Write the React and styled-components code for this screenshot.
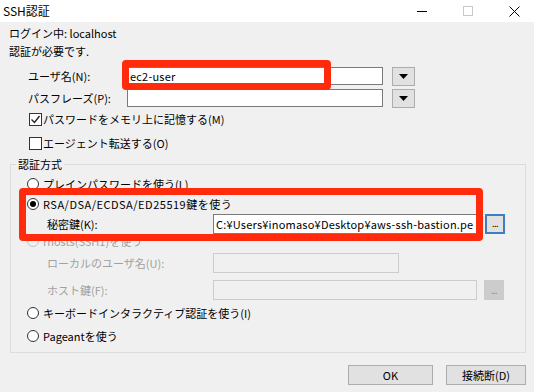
import styled, { createGlobalStyle } from 'styled-components';

const GlobalStyle = createGlobalStyle`
  html, body {
    margin: 0;
    padding: 0;
    background: #f0f0f0;
  }
  body {
    font-family: "Noto Sans CJK JP", "Noto Sans", sans-serif;
    font-size: 11px;
    color: #000;
  }
`;

const Window = styled.div`
  width: 534px;
  height: 392px;
  display: flex;
  flex-direction: column;
  background: #f0f0f0;
  overflow: hidden;
`;

const TitleBar = styled.div`
  height: 22px;
  flex-shrink: 0;
  display: flex;
  align-items: center;
  background: #fff;
  padding-left: 3px;
`;

const Title = styled.span`
  flex: 1;
  font-size: 12px;
  line-height: 22px;
`;

const TitleControls = styled.div`
  display: flex;
  margin-right: -3px;
`;

const TitleButton = styled.div`
  width: 46px;
  height: 22px;
  display: flex;
  align-items: center;
  justify-content: center;
`;

const Content = styled.div`
  display: flex;
  flex-direction: column;
  padding: 2px 8px 0 9px;
`;

const InfoLine = styled.div`
  height: 18px;
  line-height: 18px;
`;

const FieldRow = styled.div`
  display: flex;
  align-items: center;
  height: 20px;
  margin-top: ${p => p.$top || 0}px;
  padding-left: 19px;
`;

const FieldLabel = styled.span`
  width: ${p => p.$width}px;
  flex-shrink: 0;
  color: ${p => (p.$disabled ? '#a0a0a0' : '#000')};
`;

const InputWrap = styled.div`
  position: relative;
  display: flex;
`;

const TextBox = styled.input`
  box-sizing: border-box;
  width: ${p => p.$width}px;
  height: ${p => p.$height || 20}px;
  margin: 0;
  padding: 0 2px;
  border: 1px solid ${p => (p.disabled ? '#cccccc' : '#7a7a7a')};
  background: ${p => (p.disabled ? '#f0f0f0' : '#fff')};
  font: inherit;
  font-size: 11px;
  letter-spacing: 0.2px;
  color: #000;
  outline: none;
`;

const DropButton = styled.div`
  box-sizing: border-box;
  width: 23px;
  height: 19px;
  margin-left: 9px;
  display: flex;
  align-items: center;
  justify-content: center;
  background: #e1e1e1;
  border: 1px solid #adadad;
`;

const BrowseButton = styled.div`
  box-sizing: border-box;
  width: 20px;
  height: 20px;
  margin-left: ${p => p.$gap || 8}px;
  display: flex;
  align-items: flex-end;
  justify-content: center;
  padding-bottom: 4px;
  font-size: 9px;
  line-height: 9px;
  letter-spacing: -0.5px;
  background: ${p => (p.$disabled ? '#cccccc' : '#e1e1e1')};
  border: ${p => (p.$disabled ? '1px solid #cccccc' : '2px solid #3f7fbf')};
  color: ${p => (p.$disabled ? '#8a8a8a' : '#000')};
`;

const Highlight = styled.div`
  position: absolute;
  left: ${p => p.$left}px;
  top: ${p => p.$top}px;
  width: ${p => p.$width}px;
  height: ${p => p.$height}px;
  box-sizing: border-box;
  border: 7px solid #ff2b0c;
  border-radius: 4px;
  pointer-events: none;
`;

const CheckRow = styled.label`
  display: flex;
  align-items: center;
  height: 20px;
  margin-top: ${p => p.$top || 0}px;
  padding-left: 20px;
`;

const CheckBox = styled.span`
  box-sizing: border-box;
  width: 13px;
  height: 13px;
  margin-right: 1px;
  border: 1px solid #333;
  background: #fff;
  display: flex;
  align-items: center;
  justify-content: center;
`;

const Group = styled.fieldset`
  box-sizing: border-box;
  width: 516px;
  margin: 4px 0 0 1px;
  padding: 0 0 6px 16px;
  border: 1px solid #dcdcdc;
  min-width: 0;
`;

const Legend = styled.legend`
  margin-left: -11px;
  padding: 0 2px;
  line-height: 14px;
`;

const RadioRow = styled.div`
  display: flex;
  align-items: center;
  height: ${p => p.$height || 20}px;
  margin-top: ${p => p.$top || 0}px;
  color: ${p => (p.$disabled ? '#a0a0a0' : '#000')};
  letter-spacing: ${p => p.$spacing || 0}px;
`;

const Radio = styled.span`
  box-sizing: border-box;
  width: 12px;
  height: 12px;
  margin-right: 4px;
  border-radius: 50%;
  border: 1px solid ${p => (p.$disabled ? '#c4c4c4' : '#333')};
  background: ${p => (p.$disabled ? '#f0f0f0' : '#fff')};
  display: flex;
  align-items: center;
  justify-content: center;
  &::after {
    content: '';
    display: ${p => (p.$checked ? 'block' : 'none')};
    width: 6px;
    height: 6px;
    border-radius: 50%;
    background: #000;
  }
`;

const HighlightBlock = styled.div`
  position: relative;
`;

const SubRow = styled.div`
  display: flex;
  align-items: center;
  height: 20px;
  margin-top: ${p => p.$top || 0}px;
  padding-left: 20px;
`;

const Footer = styled.div`
  display: flex;
  justify-content: flex-end;
  gap: 13px;
  margin-top: 12px;
`;

const Button = styled.div`
  box-sizing: border-box;
  width: ${p => p.$width}px;
  height: 20px;
  display: flex;
  align-items: center;
  justify-content: center;
  background: #e1e1e1;
  border: 1px solid #adadad;
`;

const DownArrow = () => (
  <svg width="9" height="5" viewBox="0 0 9 5">
    <path d="M0 0h9L4.5 5z" fill="#000" />
  </svg>
);

const CheckMark = () => (
  <svg width="11" height="11" viewBox="0 0 11 11">
    <path d="M1.5 5.5l3 3 5-6.5" fill="none" stroke="#222" strokeWidth="1.4" />
  </svg>
);

const App = () => {
  return (
    <>
      <GlobalStyle />
      <Window>
        <TitleBar>
          <Title>SSH認証</Title>
          <TitleControls>
            <TitleButton>
              <svg width="10" height="10" viewBox="0 0 10 10">
                <path d="M0 5.5h10" stroke="#000" strokeWidth="1" />
              </svg>
            </TitleButton>
            <TitleButton>
              <svg width="10" height="10" viewBox="0 0 10 10">
                <rect x="0.5" y="0.5" width="9" height="9" fill="none" stroke="#c8c8c8" />
              </svg>
            </TitleButton>
            <TitleButton>
              <svg width="11" height="11" viewBox="0 0 11 11">
                <path d="M0.5 0.5l10 10M10.5 0.5l-10 10" stroke="#000" strokeWidth="1" />
              </svg>
            </TitleButton>
          </TitleControls>
        </TitleBar>

        <Content>
          <InfoLine>ログイン中: localhost</InfoLine>
          <InfoLine>認証が必要です.</InfoLine>

          <FieldRow $top={6}>
            <FieldLabel $width={99}>ユーザ名(N):</FieldLabel>
            <InputWrap>
              <TextBox $width={256} $height={18} defaultValue="ec2-user" />
              <Highlight $left={-5} $top={-7} $width={209} $height={30} />
            </InputWrap>
            <DropButton>
              <DownArrow />
            </DropButton>
          </FieldRow>
          <FieldRow $top={2}>
            <FieldLabel $width={99}>パスフレーズ(P):</FieldLabel>
            <TextBox $width={256} $height={18} type="password" />
            <DropButton>
              <DownArrow />
            </DropButton>
          </FieldRow>

          <CheckRow $top={1}>
            <CheckBox>
              <CheckMark />
            </CheckBox>
            パスワードをメモリ上に記憶する(M)
          </CheckRow>
          <CheckRow $top={4}>
            <CheckBox />
            エージェント転送する(O)
          </CheckRow>

          <Group>
            <Legend>認証方式</Legend>
            <RadioRow $top={3}>
              <Radio />
              プレインパスワードを使う(L)
            </RadioRow>
            <HighlightBlock>
              <RadioRow $spacing={0.5}>
                <Radio $checked />
                RSA/DSA/ECDSA/ED25519鍵を使う
              </RadioRow>
              <SubRow>
                <FieldLabel $width={166}>秘密鍵(K):</FieldLabel>
                <TextBox
                  $width={264}
                  readOnly
                  value="C:¥Users¥inomaso¥Desktop¥aws-ssh-bastion.pem"
                />
                <BrowseButton $gap={8}>...</BrowseButton>
              </SubRow>
              <Highlight $left={-8} $top={-6} $width={464} $height={53} />
            </HighlightBlock>
            <RadioRow $height={14} $disabled>
              <Radio $disabled />
              rhosts(SSH1)を使う
            </RadioRow>
            <SubRow $top={5}>
              <FieldLabel $width={166} $disabled>
                ローカルのユーザ名(U):
              </FieldLabel>
              <TextBox $width={186} disabled />
            </SubRow>
            <SubRow $top={7}>
              <FieldLabel $width={166} $disabled>
                ホスト鍵(F):
              </FieldLabel>
              <TextBox $width={264} disabled />
              <BrowseButton $gap={7} $disabled>
                ...
              </BrowseButton>
            </SubRow>
            <RadioRow $top={3}>
              <Radio />
              キーボードインタラクティブ認証を使う(I)
            </RadioRow>
            <RadioRow $top={3}>
              <Radio />
              Pageantを使う
            </RadioRow>
          </Group>

          <Footer>
            <Button $width={85}>OK</Button>
            <Button $width={80}>接続断(D)</Button>
          </Footer>
        </Content>
      </Window>
    </>
  );
};

export default App;
